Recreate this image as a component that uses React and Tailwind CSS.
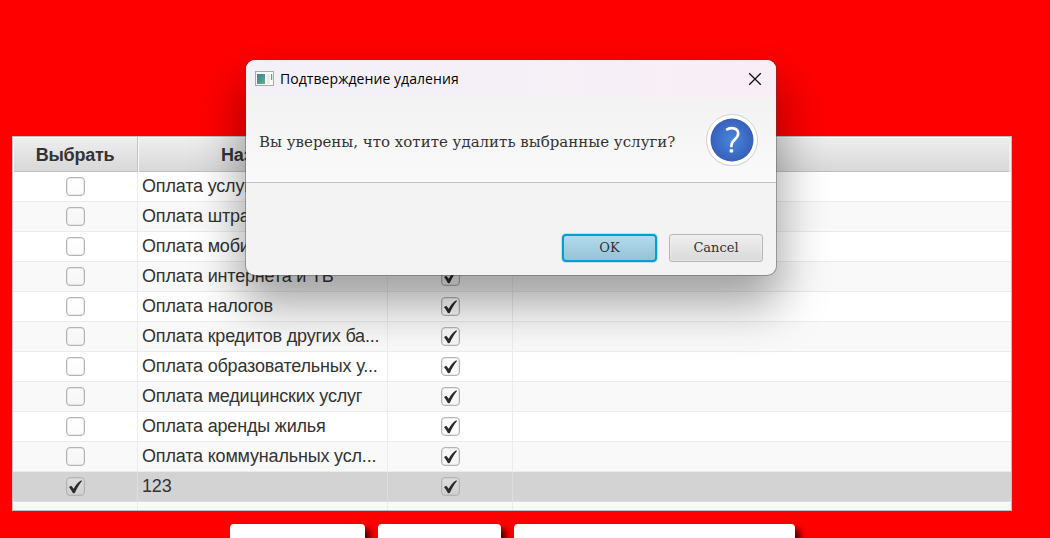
import React from "react";

const services = [
  "Оплата услуг связи",
  "Оплата штрафов",
  "Оплата мобильной связи",
  "Оплата интернета и ТВ",
  "Оплата налогов",
  "Оплата кредитов других ба...",
  "Оплата образовательных у...",
  "Оплата медицинских услуг",
  "Оплата аренды жилья",
  "Оплата коммунальных усл...",
  "123",
];

const columns = "grid grid-cols-[125px_250px_125px_1fr]";

function CheckBox({ checked }) {
  return (
    <span className="flex h-[19px] w-[19px] items-center justify-center rounded-[4px] border border-[#b4b4b4] bg-linear-to-b from-white/20 to-black/[0.01] shadow-[inset_0_0_0_0.5px_rgba(180,180,180,0.5)]">
      {checked && (
        <svg className="shrink-0" width="13" height="14" viewBox="0 0 13 14" fill="#2b2b2b">
          <path d="M0 6.9 L2.3 5.7 L4.7 8.8 C6.5 5.4 8.8 2.6 12.2 0.3 L13 1 C10 4.6 7.8 8.8 5.8 13 L4 13.3 C2.8 11.1 1.4 8.9 0 6.9 Z" />
        </svg>
      )}
    </span>
  );
}

function Row({ name, index }) {
  const selected = index === 10;
  const bg = selected ? "bg-[#d3d3d3]" : index % 2 ? "bg-[#f9f9f9]" : "bg-white";
  const line = selected ? "border-[#dedede]" : "border-[#ececec]";
  return (
    <div className={`${columns} h-[30px] border-b ${line} ${bg}`}>
      <div className={`flex items-center justify-center border-r ${line}`}>
        <CheckBox checked={selected} />
      </div>
      <div className={`overflow-hidden border-r pl-[4px] text-[18px] leading-[28px] tracking-[-0.18px] whitespace-nowrap ${line}`}>{name}</div>
      <div className={`flex items-center justify-center border-r ${line}`}>
        <CheckBox checked />
      </div>
      <div />
    </div>
  );
}

function ServicesTable() {
  return (
    <div className="ml-[12px] flex h-[375px] w-[1000px] flex-col overflow-hidden border border-[#c0c0c0] bg-[#f9f9f9]">
      <div className="flex h-[35px] shrink-0 bg-[#efefef]">
        <div className={`${columns} w-[996px] border-b border-[#c0c0c0] bg-linear-to-b from-[#efefef] to-[#d8d8d8] text-center text-[18px] leading-[36px] font-bold tracking-[-0.25px] shadow-[inset_0_1px_0_#fafafa]`}>
          <div className="border-r border-[#c4c4c4] shadow-[inset_1px_1px_0_#f7f7f7]">Выбрать</div>
          <div className="border-r border-[#c4c4c4] shadow-[inset_1px_1px_0_#f7f7f7]">Название</div>
          <div className="border-r border-[#c4c4c4]" />
          <div />
        </div>
      </div>
      {services.map((name, index) => (
        <Row key={name} name={name} index={index} />
      ))}
      <div className={`${columns} flex-1`}>
        <div className="border-r border-[#ececec]" />
        <div className="border-r border-[#ececec]" />
        <div className="border-r border-[#ececec]" />
      </div>
    </div>
  );
}

function WindowIcon() {
  return (
    <svg width="19" height="16" viewBox="0 0 19 16">
      <defs>
        <linearGradient id="pane" x1="0" y1="0" x2="1" y2="1">
          <stop offset="0" stopColor="#3f7aa0" />
          <stop offset="1" stopColor="#62b37c" />
        </linearGradient>
      </defs>
      <rect x="0.5" y="0.5" width="18" height="14" fill="#fafafa" stroke="#a3acb1" />
      <rect x="2" y="3" width="8" height="10" fill="url(#pane)" />
      <rect x="12" y="3" width="3" height="10" fill="#e9eeea" />
      <rect x="16" y="3" width="1.2" height="6" fill="#58a486" />
    </svg>
  );
}

function QuestionIcon() {
  return (
    <svg className="shrink-0" width="54" height="54" viewBox="0 0 54 54">
      <defs>
        <radialGradient id="badge">
          <stop offset="0" stopColor="#4688dc" />
          <stop offset="1" stopColor="#385fbc" />
        </radialGradient>
      </defs>
      <circle cx="27" cy="27.7" r="25.5" fill="#c8c8c8" opacity="0.6" />
      <circle cx="27" cy="27" r="25.5" fill="#fff" stroke="#d3d3d3" strokeWidth="1" />
      <circle cx="27" cy="27" r="21.5" fill="url(#badge)" />
      <path d="M21.2 17 C24.8 14.2 33.2 14.2 33.2 20.6 C33.2 26.2 26.4 26.8 26.4 32.4 V34.2" fill="none" stroke="#fff" strokeWidth="2.6" />
      <rect x="24.6" y="36.2" width="3.6" height="3.2" rx="0.7" fill="#fff" />
    </svg>
  );
}

function ConfirmDialog() {
  return (
    <div className="absolute top-[60px] left-[246px] flex h-[215px] w-[530px] flex-col overflow-hidden rounded-[9px] bg-[#f3f3f3] text-[#333] shadow-[0_0_0_1px_rgba(70,70,70,0.4),0_26px_48px_4px_rgba(0,0,0,0.36)]">
      <div className="flex h-[37px] shrink-0 items-center bg-linear-to-r from-[#f4f0f8] via-[#f5f0f7] to-[#f9edf6] pr-[14px] pl-[9px] text-black">
        <WindowIcon />
        <span className="ml-[6px] flex-1 font-['Open_Sans','Noto_Sans',sans-serif] text-[14px] leading-[20px] tracking-[0.06px] whitespace-nowrap">Подтверждение удаления</span>
        <svg width="14" height="14" viewBox="0 0 14 14" stroke="#111" strokeWidth="1.3">
          <path d="M1.2 1.2 L12.8 12.8 M12.8 1.2 L1.2 12.8" />
        </svg>
      </div>
      <div className="flex h-[86px] shrink-0 items-center justify-between border-b border-[#c3c3c3] bg-linear-to-b from-[#f2f2f2] to-[#fafafa] pr-[17px] pl-[13px]">
        <p className="pt-[5px] font-['DejaVu_Serif',serif] text-[15px] whitespace-nowrap">Вы уверены, что хотите удалить выбранные услуги?</p>
        <QuestionIcon />
      </div>
      <div className="flex flex-1 items-end justify-end gap-[12px] pr-[13px] pb-[13px] font-['DejaVu_Serif',serif] text-[13px] leading-[26px]">
        <button className="h-[28px] w-[95px] rounded-[4px] border-2 border-[#039ed3] bg-linear-to-b from-[#b2dcec] to-[#96c2d7] leading-[24px] shadow-[0_0_0_1px_#b9e1ef]">OK</button>
        <button className="h-[28px] w-[94px] rounded-[3px] border border-[#b5b5b5] bg-linear-to-b from-[#efefef] to-[#d9d9d9] shadow-[inset_0_0_0_1px_#f4f4f480]">Cancel</button>
      </div>
    </div>
  );
}

export default function App() {
  return (
    <div className="relative h-[538px] w-[1050px] overflow-hidden bg-[#ff0000] pt-[136px] font-['Liberation_Sans',Arial,sans-serif] text-[#333]">
      <ServicesTable />
      <div className="mt-[13px] ml-[230px] flex gap-[13px]">
        <div className="h-[40px] w-[135px] rounded-[4px] bg-white shadow-[5px_5px_6px_rgba(0,0,0,0.7)]" />
        <div className="h-[40px] w-[123px] rounded-[4px] bg-white shadow-[5px_5px_6px_rgba(0,0,0,0.7)]" />
        <div className="h-[40px] w-[281px] rounded-[4px] bg-white shadow-[5px_5px_6px_rgba(0,0,0,0.7)]" />
      </div>
      <ConfirmDialog />
    </div>
  );
}
